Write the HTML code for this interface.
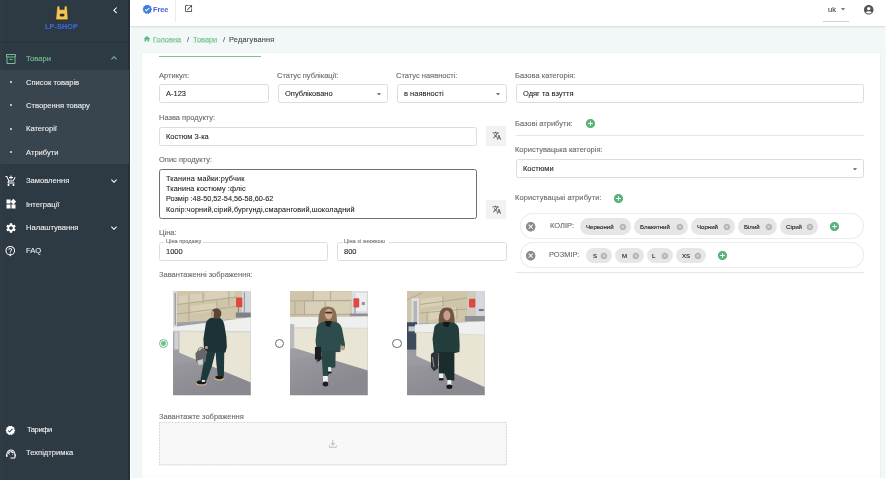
<!DOCTYPE html>
<html><head><meta charset="utf-8"><title>LP-SHOP</title>
<style>
html,body{margin:0;padding:0;width:886px;height:480px;overflow:hidden;background:#f2f7f7}
body{position:relative;font-family:"Liberation Sans", sans-serif}
.t{position:absolute;white-space:nowrap;line-height:1;font-family:"Liberation Sans", sans-serif;will-change:transform;-webkit-text-stroke-width:0.12px}
svg{display:block}
</style></head><body>
<div style="position:absolute;left:0.00px;top:0.00px;width:886.00px;height:480.00px;background:#f2f7f7"></div><div style="position:absolute;left:0.00px;top:0.00px;width:130.00px;height:480.00px;background:#2d3943"></div><div style="position:absolute;left:128.10px;top:0.00px;width:1.90px;height:480.00px;background:#25303a"></div><div style="position:absolute;left:130.00px;top:26.00px;width:1.20px;height:454.00px;background:#ffffff"></div><div style="position:absolute;left:0.00px;top:42.00px;width:128.50px;height:0.60px;background:#28333c"></div><div style="position:absolute;left:0.90px;top:0.00px;width:1.00px;height:480.00px;background:rgba(255,255,255,0.025)"></div><div style="position:absolute;left:0.00px;top:70.00px;width:128.50px;height:94.00px;background:#38444e"></div><div style="position:absolute;left:130.00px;top:0.00px;width:756.00px;height:26.00px;background:#fff;box-shadow:0 1px 2px rgba(0,0,0,0.12)"></div><div style="position:absolute;left:175.00px;top:0.00px;width:0.70px;height:21.70px;background:#ececec"></div><div style="position:absolute;left:142.40px;top:53.00px;width:737.60px;height:427.00px;background:#fff;box-shadow:0 0 1.5px rgba(0,0,0,0.10)"></div><div style="position:absolute;left:142.40px;top:475.00px;width:737.60px;height:3.00px;background:#fcfcfc"></div><div style="position:absolute;left:130.00px;top:478.00px;width:756.00px;height:2.00px;background:#fff"></div><div style="position:absolute;left:884.70px;top:26.00px;width:1.30px;height:452.00px;background:#f8fbfb"></div><div style="position:absolute;left:159.00px;top:55.80px;width:102.30px;height:1.20px;background:#7cc496"></div><svg style="position:absolute;left:55px;top:5px" width="14" height="16" viewBox="0 0 14 16"><path fill="#f5c451" stroke="#1f262c" stroke-width="0.5" d="M2.1 1.6 Q2.1 1.1 2.7 1.1 L4.2 1.1 Q4.7 1.1 4.7 1.6 L4.9 4.6 L9.2 4.6 L9.4 1.6 Q9.4 1.1 9.9 1.1 L11.4 1.1 Q12 1.1 12 1.6 L13 13.6 Q13.1 14.8 12 14.8 L1.8 14.8 Q0.8 14.8 0.9 13.6 Z"/><rect x="4.7" y="8.8" width="4.8" height="2.6" rx="1.3" fill="#2a2a2a"/></svg><div class="t" style="left:45.00px;top:22.51px;font-size:7.2px;color:#3d68da;font-weight:700;letter-spacing:0.15px">LP-SHOP</div><svg style="position:absolute;left:108.50px;top:3.50px;" width="12.5" height="12.5" viewBox="0 0 24 24"><path fill="#ffffff" d="M15.41 7.41L14 6l-6 6 6 6 1.41-1.41L10.83 12z"/></svg><svg style="position:absolute;left:4.80px;top:52.70px;" width="12" height="12" viewBox="0 0 24 24"><path fill="#74bf8f" d="M20 2H4c-1 0-2 .9-2 2v3.01c0 .72.43 1.34 1 1.69V20c0 1.1 1.1 2 2 2h14c.9 0 2-.9 2-2V8.7c.57-.35 1-.97 1-1.69V4c0-1.1-1-2-2-2zm-1 18H5V9h14v11zm1-13H4V4h16v3zM9 12h6v2H9z"/></svg><div class="t" style="left:26.20px;top:54.77px;font-size:7.6px;color:#74bf8f;font-weight:400;-webkit-text-stroke:0.15px #74bf8f">Товари</div><svg style="position:absolute;left:107.80px;top:52.30px;" width="12" height="12" viewBox="0 0 24 24"><path fill="#74bf8f" d="M12 8l-6 6 1.41 1.41L12 10.83l4.59 4.58L18 14z"/></svg><div style="position:absolute;left:9.80px;top:81.20px;width:2.00px;height:2.00px;background:#e8e8e8;border-radius:50%"></div><div class="t" style="left:26.20px;top:78.52px;font-size:7.6px;color:#f0f0f0;font-weight:400;-webkit-text-stroke:0.1px #f0f0f0">Список товарів</div><div style="position:absolute;left:9.80px;top:104.40px;width:2.00px;height:2.00px;background:#e8e8e8;border-radius:50%"></div><div class="t" style="left:26.20px;top:101.72px;font-size:7.6px;color:#f0f0f0;font-weight:400;-webkit-text-stroke:0.1px #f0f0f0">Створення товару</div><div style="position:absolute;left:9.80px;top:127.80px;width:2.00px;height:2.00px;background:#e8e8e8;border-radius:50%"></div><div class="t" style="left:26.20px;top:125.12px;font-size:7.6px;color:#f0f0f0;font-weight:400;-webkit-text-stroke:0.1px #f0f0f0">Категорії</div><div style="position:absolute;left:9.80px;top:151.40px;width:2.00px;height:2.00px;background:#e8e8e8;border-radius:50%"></div><div class="t" style="left:26.20px;top:148.72px;font-size:7.6px;color:#f0f0f0;font-weight:400;-webkit-text-stroke:0.1px #f0f0f0">Атрибути</div><svg style="position:absolute;left:4.60px;top:174.60px;" width="12" height="12" viewBox="0 0 24 24"><path fill="#ffffff" d="M11 9h2V6h3V4h-3V1h-2v3H8v2h3v3zm-4 9c-1.1 0-1.99.9-1.99 2S5.9 22 7 22s2-.9 2-2-.9-2-2-2zm10 0c-1.1 0-1.99.9-1.99 2s.89 2 1.99 2 2-.9 2-2-.9-2-2-2zm-9.83-3.25l.03-.12.9-1.63h7.45c.75 0 1.41-.41 1.75-1.03l3.86-7.01L19.42 4h-.01l-1.1 2-2.76 5H8.53l-.13-.27L6.16 6l-.95-2-.94-2H1v2h2l3.6 7.59-1.35 2.45c-.16.28-.25.61-.25.96 0 1.1.9 2 2 2h12v-2H7.42c-.13 0-.25-.11-.25-.25z"/></svg><div class="t" style="left:26.20px;top:176.92px;font-size:7.6px;color:#f0f0f0;font-weight:400;-webkit-text-stroke:0.1px #f0f0f0">Замовлення</div><svg style="position:absolute;left:107.80px;top:174.60px;" width="12" height="12" viewBox="0 0 24 24"><path fill="#ffffff" d="M16.59 8.59L12 13.17 7.41 8.59 6 10l6 6 6-6z"/></svg><svg style="position:absolute;left:4.60px;top:198.30px;" width="12" height="12" viewBox="0 0 24 24"><path fill="#ffffff" d="M13 13v8h8v-8h-8zM3 21h8v-8H3v8zM3 3v8h8V3H3zm13.66-1.31L11 7.34 16.66 13l5.66-5.66-5.66-5.65z"/></svg><div class="t" style="left:26.20px;top:200.62px;font-size:7.6px;color:#f0f0f0;font-weight:400;-webkit-text-stroke:0.1px #f0f0f0">Інтеграції</div><svg style="position:absolute;left:4.60px;top:221.70px;" width="12" height="12" viewBox="0 0 24 24"><path fill="#ffffff" d="M19.14 12.94c.04-.3.06-.61.06-.94 0-.32-.02-.64-.07-.94l2.03-1.58c.18-.14.23-.41.12-.61l-1.92-3.32c-.12-.22-.37-.29-.59-.22l-2.39.96c-.5-.38-1.03-.7-1.62-.94l-.36-2.54c-.04-.24-.24-.41-.48-.41h-3.84c-.24 0-.43.17-.47.41l-.36 2.54c-.59.24-1.13.57-1.62.94l-2.39-.96c-.22-.08-.47 0-.59.22L2.74 8.87c-.12.21-.08.47.12.61l2.03 1.58c-.05.3-.09.63-.09.94s.02.64.07.94l-2.03 1.58c-.18.14-.23.41-.12.61l1.92 3.32c.12.22.37.29.59.22l2.39-.96c.5.38 1.03.7 1.62.94l.36 2.54c.05.24.24.41.48.41h3.84c.24 0 .44-.17.47-.41l.36-2.54c.59-.24 1.13-.56 1.62-.94l2.39.96c.22.08.47 0 .59-.22l1.92-3.32c.12-.22.07-.47-.12-.61l-2.01-1.58zM12 15.6c-1.98 0-3.6-1.62-3.6-3.6s1.62-3.6 3.6-3.6 3.6 1.62 3.6 3.6-1.62 3.6-3.6 3.6z"/></svg><div class="t" style="left:26.20px;top:224.02px;font-size:7.6px;color:#f0f0f0;font-weight:400;-webkit-text-stroke:0.1px #f0f0f0">Налаштування</div><svg style="position:absolute;left:107.80px;top:221.70px;" width="12" height="12" viewBox="0 0 24 24"><path fill="#ffffff" d="M16.59 8.59L12 13.17 7.41 8.59 6 10l6 6 6-6z"/></svg><svg style="position:absolute;left:4.44px;top:245.06px" width="12.5" height="12.5" viewBox="0 0 24 24"><circle cx="12" cy="11" r="8.2" stroke="#fff" stroke-width="2" fill="none"/><path d="M9.6 18.2 L12 22 L14.4 18.2 Z" fill="#fff"/><path fill="#fff" d="M11 14.2h2v2h-2z M12 5.6c-2 0-3.5 1.5-3.5 3.3h1.8c0-.9.8-1.6 1.7-1.6s1.7.7 1.7 1.6c0 1.6-2.6 1.5-2.6 4.1h1.8c0-1.9 2.6-2.2 2.6-4.1C15.5 7.1 14 5.6 12 5.6z"/></svg><div class="t" style="left:26.20px;top:247.12px;font-size:7.6px;color:#f0f0f0;font-weight:400;-webkit-text-stroke:0.1px #f0f0f0">FAQ</div><svg style="position:absolute;left:5.25px;top:424.70px;" width="10.8" height="10.8" viewBox="0 0 24 24"><path fill="#ffffff" d="M23 12l-2.44-2.79.34-3.69-3.61-.82-1.89-3.2L12 2.96 8.6 1.5 6.71 4.69 3.1 5.5l.34 3.7L1 12l2.44 2.79-.34 3.7 3.61.82L8.6 22.5l3.4-1.47 3.4 1.46 1.89-3.19 3.61-.82-.34-3.69L23 12zm-12.91 4.72l-3.8-3.81 1.48-1.48 2.32 2.33 5.85-5.87 1.48 1.48-7.33 7.35z"/></svg><div class="t" style="left:26.60px;top:426.27px;font-size:7.6px;color:#f0f0f0;font-weight:400;-webkit-text-stroke:0.1px #f0f0f0;letter-spacing:-0.45px">Тарифи</div><svg style="position:absolute;left:4.70px;top:448.40px;" width="11.9" height="11.9" viewBox="0 0 24 24"><path fill="#ffffff" d="M21 12.22C21 6.73 16.74 3 12 3c-4.69 0-9 3.65-9 9.28-.6.34-1 .98-1 1.72v2c0 1.1.9 2 2 2h1v-6.1c0-3.87 3.13-7 7-7s7 3.13 7 7V19h-8v2h8c1.1 0 2-.9 2-2v-1.22c.59-.31 1-.92 1-1.64v-2.3c0-.7-.41-1.31-1-1.62z M9 14a1 1 0 1 0 0-2 1 1 0 0 0 0 2z M15 14a1 1 0 1 0 0-2 1 1 0 0 0 0 2z M18 11.03C17.52 8.18 15.04 6 12.05 6c-3.03 0-6.29 2.51-6.03 6.45 2.47-1.01 4.33-3.21 4.86-5.89 1.31 2.63 4 4.44 7.12 4.47z"/></svg><div class="t" style="left:26.40px;top:449.37px;font-size:7.6px;color:#f0f0f0;font-weight:400;-webkit-text-stroke:0.1px #f0f0f0">Техпідтримка</div><svg style="position:absolute;left:142.30px;top:4.20px;" width="10.6" height="10.6" viewBox="0 0 24 24"><path fill="#3b7dd8" d="M23 12l-2.44-2.79.34-3.69-3.61-.82-1.89-3.2L12 2.96 8.6 1.5 6.71 4.69 3.1 5.5l.34 3.7L1 12l2.44 2.79-.34 3.7 3.61.82L8.6 22.5l3.4-1.47 3.4 1.46 1.89-3.19 3.61-.82-.34-3.69L23 12zm-12.91 4.72l-3.8-3.81 1.48-1.48 2.32 2.33 5.85-5.87 1.48 1.48-7.33 7.35z"/></svg><div class="t" style="left:153.00px;top:6.11px;font-size:7.2px;color:#5469d4;font-weight:700;">Free</div><svg style="position:absolute;left:184.10px;top:4.40px;" width="9.2" height="9.2" viewBox="0 0 24 24"><path fill="#333333" d="M19 19H5V5h7V3H5c-1.11 0-2 .9-2 2v14c0 1.1.89 2 2 2h14c1.1 0 2-.9 2-2v-7h-2v7zM14 3v2h3.59l-9.83 9.83 1.41 1.41L19 6.41V10h2V3h-7z"/></svg><div class="t" style="left:827.80px;top:5.85px;font-size:7.5px;color:#333;font-weight:400;-webkit-text-stroke-width:0.05px">uk</div><svg style="position:absolute;left:838.40px;top:4.00px;" width="10" height="10" viewBox="0 0 24 24"><path fill="#555" d="M7 10l5 5 5-5z"/></svg><div style="position:absolute;left:822.70px;top:20.60px;width:26.20px;height:0.90px;background:#d2d2d2"></div><svg style="position:absolute;left:862.85px;top:4.05px;" width="11.5" height="11.5" viewBox="0 0 24 24"><path fill="#555" d="M12 2C6.48 2 2 6.48 2 12s4.48 10 10 10 10-4.48 10-10S17.52 2 12 2zm0 4c1.93 0 3.5 1.57 3.5 3.5S13.93 13 12 13s-3.5-1.57-3.5-3.5S10.07 6 12 6zm0 14c-2.03 0-4.43-.82-6.14-2.88C7.55 15.8 9.68 15 12 15s4.45.8 6.14 2.12C16.43 19.18 14.03 20 12 20z"/></svg><svg style="position:absolute;left:142.70px;top:35.20px;" width="7.8" height="7.8" viewBox="0 0 24 24"><path fill="#5ab47a" d="M10 20v-6h4v6h5v-8h3L12 3 2 12h3v8z"/></svg><div class="t" style="left:152.60px;top:35.94px;font-size:7.4px;color:#6dbd88;font-weight:400;text-decoration:underline;text-decoration-color:#cfe9d7;text-underline-offset:0.3px">Головна</div><div class="t" style="left:186.60px;top:35.94px;font-size:7.4px;color:#555;font-weight:400;">/</div><div class="t" style="left:193.30px;top:35.94px;font-size:7.4px;color:#6dbd88;font-weight:400;text-decoration:underline;text-decoration-color:#cfe9d7;text-underline-offset:0.3px">Товари</div><div class="t" style="left:222.70px;top:35.94px;font-size:7.4px;color:#555;font-weight:400;">/</div><div class="t" style="left:229.30px;top:35.94px;font-size:7.4px;color:#4a4a4a;font-weight:400;letter-spacing:0.18px">Редагування</div><div class="t" style="left:158.90px;top:71.55px;font-size:7.5px;color:#6b6b6b;font-weight:400;">Артикул:</div><div class="t" style="left:277.30px;top:71.55px;font-size:7.5px;color:#6b6b6b;font-weight:400;">Статус публікації:</div><div class="t" style="left:396.30px;top:71.55px;font-size:7.5px;color:#6b6b6b;font-weight:400;">Статус наявності:</div><div class="t" style="left:515.30px;top:71.55px;font-size:7.5px;color:#6b6b6b;font-weight:400;">Базова категорія:</div><div style="position:absolute;left:159.20px;top:84.20px;width:110.10px;height:19.20px;box-sizing:border-box;border:1px solid #dcdcdc;border-radius:2.5px;background:#fff"></div><div style="position:absolute;left:277.60px;top:84.20px;width:110.90px;height:19.20px;box-sizing:border-box;border:1px solid #dcdcdc;border-radius:2.5px;background:#fff"></div><div style="position:absolute;left:396.60px;top:84.20px;width:110.30px;height:19.20px;box-sizing:border-box;border:1px solid #dcdcdc;border-radius:2.5px;background:#fff"></div><div style="position:absolute;left:515.60px;top:84.20px;width:348.10px;height:19.20px;box-sizing:border-box;border:1px solid #dcdcdc;border-radius:2.5px;background:#fff"></div><div class="t" style="left:165.50px;top:90.45px;font-size:7.5px;color:#222222;font-weight:400;-webkit-text-stroke-width:0.08px;">A-123</div><div class="t" style="left:284.70px;top:90.45px;font-size:7.5px;color:#222222;font-weight:400;-webkit-text-stroke-width:0.08px;">Опубліковано</div><div class="t" style="left:403.70px;top:90.45px;font-size:7.5px;color:#222222;font-weight:400;-webkit-text-stroke-width:0.08px;">в наявності</div><div class="t" style="left:522.70px;top:90.45px;font-size:7.5px;color:#222222;font-weight:400;-webkit-text-stroke-width:0.08px;">Одяг та взуття</div><svg style="position:absolute;left:374.20px;top:88.70px;" width="10" height="10" viewBox="0 0 24 24"><path fill="#555" d="M7 10l5 5 5-5z"/></svg><svg style="position:absolute;left:493.10px;top:88.70px;" width="10" height="10" viewBox="0 0 24 24"><path fill="#555" d="M7 10l5 5 5-5z"/></svg><div class="t" style="left:158.90px;top:113.65px;font-size:7.5px;color:#6b6b6b;font-weight:400;">Назва продукту:</div><div style="position:absolute;left:159.20px;top:126.80px;width:318.20px;height:18.80px;box-sizing:border-box;border:1px solid #dcdcdc;border-radius:2.5px;background:#fff"></div><div class="t" style="left:165.70px;top:132.65px;font-size:7.5px;color:#222222;font-weight:400;-webkit-text-stroke-width:0.08px;">Костюм 3-ка</div><div style="position:absolute;left:486.25px;top:126.25px;width:19.65px;height:19.65px;background:#f2f2f2"></div><svg style="position:absolute;left:491.80px;top:131.40px;" width="9.5" height="9.5" viewBox="0 0 24 24"><path fill="#444" d="M12.87 15.07l-2.54-2.51.03-.03c1.74-1.94 2.98-4.17 3.71-6.53H17V4h-7V2H8v2H1v1.99h11.17C11.5 7.92 10.44 9.75 9 11.35 8.07 10.32 7.3 9.19 6.69 8h-2c.73 1.63 1.73 3.17 2.98 4.56l-5.09 5.02L4 19l5-5 3.11 3.11.76-2.04zM18.5 10h-2L12 22h2l1.12-3h4.75L21 22h2l-4.5-12zm-2.62 7l1.62-4.33L19.12 17h-3.24z"/></svg><div class="t" style="left:158.90px;top:155.95px;font-size:7.5px;color:#6b6b6b;font-weight:400;">Опис продукту:</div><div style="position:absolute;left:159.20px;top:168.60px;width:318.20px;height:50.60px;box-sizing:border-box;border:1px solid #6f6f6f;border-radius:2.5px;background:#fff"></div><div class="t" style="left:166.00px;top:174.62px;font-size:7.3px;color:#222222;font-weight:400;-webkit-text-stroke-width:0.08px;letter-spacing:0.18px">Тканина майки:рубчик</div><div class="t" style="left:166.00px;top:184.99px;font-size:7.3px;color:#222222;font-weight:400;-webkit-text-stroke-width:0.08px;letter-spacing:0.1px">Тканина костюму :фліс</div><div class="t" style="left:166.00px;top:195.36px;font-size:7.3px;color:#222222;font-weight:400;-webkit-text-stroke-width:0.08px;letter-spacing:0px">Розмір :48-50,52-54,56-58,60-62</div><div class="t" style="left:166.00px;top:205.73px;font-size:7.3px;color:#222222;font-weight:400;-webkit-text-stroke-width:0.08px;letter-spacing:0.115px">Колір:чорний,сірий,бургунді,смаранговий,шоколадний</div><div style="position:absolute;left:486.25px;top:199.80px;width:19.65px;height:19.60px;background:#f2f2f2"></div><svg style="position:absolute;left:491.80px;top:204.90px;" width="9.5" height="9.5" viewBox="0 0 24 24"><path fill="#444" d="M12.87 15.07l-2.54-2.51.03-.03c1.74-1.94 2.98-4.17 3.71-6.53H17V4h-7V2H8v2H1v1.99h11.17C11.5 7.92 10.44 9.75 9 11.35 8.07 10.32 7.3 9.19 6.69 8h-2c.73 1.63 1.73 3.17 2.98 4.56l-5.09 5.02L4 19l5-5 3.11 3.11.76-2.04zM18.5 10h-2L12 22h2l1.12-3h4.75L21 22h2l-4.5-12zm-2.62 7l1.62-4.33L19.12 17h-3.24z"/></svg><div class="t" style="left:158.90px;top:228.75px;font-size:7.5px;color:#6b6b6b;font-weight:400;">Ціна:</div><div style="position:absolute;left:159.20px;top:242.20px;width:169.20px;height:18.50px;box-sizing:border-box;border:1px solid #dcdcdc;border-radius:2.5px;background:#fff"></div><div style="position:absolute;left:164.10px;top:241.20px;width:39.30px;height:2.50px;background:#fff"></div><div class="t" style="left:165.60px;top:239.46px;font-size:5.6px;color:#777;font-weight:400;">Ціна продажу</div><div style="position:absolute;left:337.40px;top:242.20px;width:169.60px;height:18.50px;box-sizing:border-box;border:1px solid #dcdcdc;border-radius:2.5px;background:#fff"></div><div style="position:absolute;left:342.50px;top:241.20px;width:46.20px;height:2.50px;background:#fff"></div><div class="t" style="left:344.00px;top:239.46px;font-size:5.6px;color:#777;font-weight:400;">Ціна зі знижкою</div><div class="t" style="left:166.30px;top:248.05px;font-size:7.5px;color:#222222;font-weight:400;-webkit-text-stroke-width:0.08px;">1000</div><div class="t" style="left:343.90px;top:248.05px;font-size:7.5px;color:#222222;font-weight:400;-webkit-text-stroke-width:0.08px;">800</div><div class="t" style="left:158.90px;top:271.15px;font-size:7.5px;color:#6b6b6b;font-weight:400;">Завантаженні зображення:</div><svg style="position:absolute;left:173.4px;top:291.4px" width="77.8" height="104.2" viewBox="0 0 78 104" preserveAspectRatio="none"><defs><linearGradient id="gf1" x1="0" y1="0" x2="0.3" y2="1"><stop offset="0.45" stop-color="#a09fa6"/><stop offset="1" stop-color="#8a8990"/></linearGradient><clipPath id="cf1"><rect x="0" y="0" width="78" height="104"/></clipPath></defs><g clip-path="url(#cf1)"><g><rect x="-2" y="-2" width="82" height="108" fill="url(#gf1)"/><polygon points="-2,-2 80,-2 80,27 4,31.5 -2,36.5" fill="#cec5ab"/><polygon points="6,5 30,2 30,10 6,13" fill="#d9d0b8"/><polygon points="18,15 44,12 44,20 18,23" fill="#d9d0b8"/><polygon points="32,1 62,-2 62,6 32,9" fill="#d9d0b8"/><path d="M4 13.5 L64 6 M4 23 L64 15.5 M16 4 L16 30 M30 2 L30 12 M44 10 L44 26 M56 0 L56 15" stroke="#b3aa91" stroke-width="1" fill="none"/><rect x="-2" y="-2" width="6" height="39" fill="#d6d8da"/><rect x="1.5" y="2" width="1.5" height="32" fill="#9da1a6"/><rect x="69" y="-2" width="11" height="27" fill="#d4d7db"/><rect x="71" y="1" width="1.2" height="22" fill="#a0a4a8"/><rect x="63" y="21.5" width="17" height="5" fill="#7f8186"/><rect x="65" y="15" width="1.2" height="8" fill="#8a8a8a"/><rect x="63.2" y="6.5" width="6.3" height="9.8" rx="1" fill="#e0473f"/><polygon points="-2,37 4,35.5 80,26 80,41 -2,40.5" fill="#efefed"/><polygon points="-2,39.5 80,40 80,42 -2,41.5" fill="#d9d8d2"/><polygon points="6.2,41 80,41.5 80,92 6.2,61.6" fill="#e9e5d4"/><rect x="-2" y="40.5" width="8.2" height="19" fill="#a9abb0"/><rect x="1.5" y="41" width="4" height="17" fill="#cfd1d3"/><polygon points="-2,59 6.2,61.6 30,72 -2,72" fill="#a09ea5" opacity="0.6"/><path d="M33,32 Q35,27 40,26.5 L46,26.5 Q50.5,28 51.5,34 L53.5,46 L54,56 L52.6,61.3 L45,62 L34,61 L31,58 L30.5,48 Z" fill="#1d3234"/><ellipse cx="43.5" cy="22.5" rx="5" ry="5.3" fill="#5b4538"/><rect x="38.4" y="20" width="2.6" height="7" rx="1.2" fill="#c9a78f"/><polygon points="34,60 42.5,61 39,75 33.6,89.5 27.5,89.5 30,75" fill="#1e393c"/><polygon points="42.7,61 51.4,61 51,85.8 45,85.8 43.5,72" fill="#1e393c"/><ellipse cx="28.5" cy="92" rx="5.5" ry="2.6" fill="#c9ad8e"/><ellipse cx="28.5" cy="91" rx="4.8" ry="2" fill="#1a1a1a"/><rect x="29" y="88.8" width="3" height="2" fill="#e6e6e6"/><ellipse cx="46.5" cy="87" rx="5" ry="2.3" fill="#c9ad8e"/><ellipse cx="46.5" cy="86.2" rx="4.3" ry="1.8" fill="#1c1c1c"/><path d="M22.5,62 L30,57 L33.6,60 L33,70 L27,74.2 L23,70 Z" fill="#66666a"/><path d="M24,69.5 L30,68 L30,73 L26,74 Z" fill="#cfcfcf"/><path d="M24.5,61 Q26,55 30,57" stroke="#444" stroke-width="0.8" fill="none"/><rect x="32" y="55" width="3" height="3" rx="1" fill="#b89882"/></g></g></svg><svg style="position:absolute;left:289.8px;top:291.4px" width="77.8" height="104.2" viewBox="0 0 78 104" preserveAspectRatio="none"><defs><linearGradient id="gf2" x1="0" y1="0" x2="0.3" y2="1"><stop offset="0.45" stop-color="#a09fa6"/><stop offset="1" stop-color="#8a8990"/></linearGradient><clipPath id="cf2"><rect x="0" y="0" width="78" height="104"/></clipPath></defs><g clip-path="url(#cf2)"><g><rect x="-2" y="-2" width="82" height="108" fill="url(#gf2)"/><polygon points="-2,-2 80,-2 80,25 -2,26" fill="#cec5ab"/><rect x="24" y="0" width="16" height="9" fill="#d9d0b8"/><rect x="15" y="11" width="20" height="12" fill="#d9d0b8"/><rect x="41" y="1" width="22" height="8" fill="#d9d0b8"/><rect x="36" y="11" width="24" height="12" fill="#d9d0b8"/><path d="M-2 9.9 L62 9.3 M-2 23.6 L62 23.3 M23.3 0 L23.3 9.6 M40.8 0 L40.8 9.5 M14.6 10 L14.6 23.5 M35.2 10 L35.2 23.4 M5 10 L5 23.5" stroke="#b3aa91" stroke-width="1" fill="none"/><rect x="62" y="-2" width="18" height="26" fill="#d9dce0"/><rect x="66" y="2" width="11" height="18" fill="#eceef0"/><rect x="72" y="11" width="3" height="3" fill="#8f9397"/><rect x="60" y="22.5" width="20" height="3.2" fill="#8d8f92"/><rect x="64.6" y="15" width="1.2" height="8" fill="#9a9a9a"/><rect x="63.6" y="7.2" width="5.8" height="9.2" rx="1" fill="#e0473f"/><polygon points="-2,26 80,25.2 80,37.4 -2,36.5" fill="#efefed"/><polygon points="-2,35.8 80,36.6 80,38.4 -2,37.6" fill="#dcdbd5"/><polygon points="4,37.5 80,38 80,80 4,56.8" fill="#e9e5d4"/><rect x="-2" y="33" width="6.2" height="25" fill="#b8babd"/><polygon points="-2,57 4,57 30,65 -2,68" fill="#a09ea5" opacity="0.5"/><path d="M28.5,37 Q27.5,21 32.5,17 Q38,14 43.5,17 Q48,21 47,37 Z" fill="#8a6d55"/><path d="M27,36 Q29,31 35,30.5 L43,30.5 Q50,30.5 52,37 L55.1,53 Q55.5,58.5 52.5,58.5 L51,53 L50.5,61 L27,61.5 L25.6,50 Z" fill="#2d4d4d"/><ellipse cx="38.8" cy="23" rx="3.8" ry="5.4" fill="#d0a890"/><rect x="35.3" y="20.6" width="7" height="1.8" rx="0.8" fill="#3a3030"/><polygon points="35,30 42,30 40,36 36,35" fill="#1a1a1a"/><polygon points="31.5,60 45.8,60 45.5,76 41,77 38.2,84.8 33,84.8" fill="#2a4847"/><rect x="38.2" y="76" width="3" height="4.5" fill="#f0f0f0"/><rect x="38" y="80.5" width="3.6" height="1.8" fill="#1a1a1a"/><rect x="33.2" y="84.8" width="4.7" height="5.8" fill="#f2f2f2"/><ellipse cx="35.6" cy="92.8" rx="2.8" ry="2.5" fill="#1c1c24"/><polygon points="25,56 31,55.6 32,68 28,70.8 25,68" fill="#1d1d1f"/><rect x="26.5" y="68" width="1.2" height="4" fill="#6d7080"/><ellipse cx="53" cy="57" rx="2" ry="2.5" fill="#c49a82"/></g></g></svg><svg style="position:absolute;left:407.4px;top:291.4px" width="77.8" height="104.2" viewBox="0 0 78 104" preserveAspectRatio="none"><defs><linearGradient id="gf3" x1="0" y1="0" x2="0.3" y2="1"><stop offset="0.45" stop-color="#a09fa6"/><stop offset="1" stop-color="#8a8990"/></linearGradient><clipPath id="cf3"><rect x="0" y="0" width="78" height="104"/></clipPath></defs><g clip-path="url(#cf3)"><g><rect x="-2" y="-2" width="82" height="108" fill="url(#gf3)"/><polygon points="-2,-2 80,-2 80,30 -2,33" fill="#cec5ab"/><polygon points="14,8 36,5 36,14 14,17" fill="#d9d0b8"/><polygon points="22,20 50,16 50,26 22,29" fill="#d9d0b8"/><path d="M-1 9.5 L15 2 M13 13.5 L60 7 M13 22 L60 18 M20 22 L20 32 M36 5 L36 15 M50 16 L50 28" stroke="#b3aa91" stroke-width="1" fill="none"/><rect x="4.5" y="7.2" width="7.4" height="28" fill="#dfe0e0"/><rect x="6.5" y="10" width="3.5" height="23" fill="#b0b5b8"/><rect x="60.5" y="-2" width="9" height="31" fill="#cfcac0"/><rect x="69.1" y="-2" width="10" height="27" fill="#d5d8dc"/><rect x="72" y="18" width="5" height="2" fill="#70757a"/><rect x="58" y="25" width="22" height="5" fill="#8e9093"/><rect x="62.2" y="7.8" width="6.3" height="8.6" rx="1" fill="#e0473f"/><rect x="-2" y="31.2" width="12.2" height="27.3" fill="#3b4a5c"/><rect x="1.5" y="35.3" width="8.5" height="5" fill="#c5c8cc"/><polygon points="7.9,33.5 80,30 80,44.4 7.9,41" fill="#efefed"/><polygon points="7.9,40.5 80,43.8 80,45.5 7.9,42.2" fill="#d9d8d2"/><polygon points="9.3,41.5 80,44.5 80,97 9.3,64.9" fill="#e9e5d4"/><polygon points="-2,58.5 9.3,64.9 30,74 -2,74" fill="#a09ea5" opacity="0.5"/><path d="M32,35 Q31,21 35.5,17.5 Q40,15.5 44.5,17.5 Q48.5,22 47.5,35 Z" fill="#6e5444"/><path d="M27.5,36 Q29,32 35,31.5 L45,31.5 Q51,32 52,38 L52.8,55 L52.5,61 L48,62 L27,62 L25.6,48 Z" fill="#223d3c"/><ellipse cx="40" cy="24.5" rx="3.5" ry="5" fill="#c8a08a"/><polygon points="36,31 43,31 41.5,36 37,35.5" fill="#141818"/><polygon points="31.4,61 47.5,61 47.5,89.4 40.5,89 37.6,82.4 32,82.4" fill="#1b2c2d"/><rect x="32.2" y="82.4" width="4" height="4.6" fill="#f0f0f0"/><rect x="32" y="87" width="4.6" height="2.2" fill="#1a1a1a"/><rect x="40.5" y="88.9" width="4" height="5.2" fill="#f0f0f0"/><ellipse cx="42.5" cy="95.5" rx="3" ry="2.2" fill="#161616"/><polygon points="24,63 30,59 31.4,62 31,77 27,80.1 24,76" fill="#2f3338"/><path d="M25.5,66 L27,76" stroke="#8f97a3" stroke-width="1" fill="none"/></g></g></svg><div style="position:absolute;left:158.80px;top:338.80px;width:9.2px;height:9.2px;box-sizing:border-box;border:1px solid #6cc08a;border-radius:50%"></div><div style="position:absolute;left:161.00px;top:341.00px;width:4.8px;height:4.8px;background:#6cc08a;border-radius:50%"></div><div style="position:absolute;left:275.30px;top:338.90px;width:9.2px;height:9.2px;box-sizing:border-box;border:1px solid #6a6a6a;border-radius:50%"></div><div style="position:absolute;left:392.40px;top:338.90px;width:9.2px;height:9.2px;box-sizing:border-box;border:1px solid #6a6a6a;border-radius:50%"></div><div class="t" style="left:158.60px;top:413.15px;font-size:7.5px;color:#6b6b6b;font-weight:400;">Завантажте зображення</div><div style="position:absolute;left:158.80px;top:422.40px;width:347.90px;height:43.20px;background:#f8f8f8"></div><svg style="position:absolute;left:158.8px;top:422.4px" width="347.9" height="43.2"><rect x="0.5" y="0.5" width="346.9" height="42.2" fill="none" stroke="#d2d2d2" stroke-width="0.9" stroke-dasharray="1.8 1.2"/></svg><svg style="position:absolute;left:327.25px;top:438.35px;" width="11.7" height="11.7" viewBox="0 0 24 24"><path fill="#bdbdbd" d="M18 15v3H6v-3H4v3c0 1.1.9 2 2 2h12c1.1 0 2-.9 2-2v-3h-2zm-1-4l-1.41-1.41L13 12.17V4h-2v8.17L8.41 9.59 7 11l5 5 5-5z"/></svg><div class="t" style="left:515.30px;top:120.25px;font-size:7.5px;color:#6b6b6b;font-weight:400;">Базові атрибути:</div><svg style="position:absolute;left:584.60px;top:118.20px;" width="11" height="11" viewBox="0 0 24 24"><path fill="#5ab47a" d="M12 2C6.48 2 2 6.48 2 12s4.48 10 10 10 10-4.48 10-10S17.52 2 12 2zm5 11h-4v4h-2v-4H7v-2h4V7h2v4h4v2z"/></svg><div style="position:absolute;left:515.60px;top:135.00px;width:348.10px;height:0.80px;background:#e6e6e6"></div><div class="t" style="left:515.30px;top:145.95px;font-size:7.5px;color:#6b6b6b;font-weight:400;">Користувацька категорія:</div><div style="position:absolute;left:515.60px;top:159.30px;width:348.10px;height:18.50px;box-sizing:border-box;border:1px solid #dcdcdc;border-radius:2.5px;background:#fff"></div><div class="t" style="left:522.70px;top:165.25px;font-size:7.5px;color:#222222;font-weight:400;-webkit-text-stroke-width:0.08px;">Костюми</div><svg style="position:absolute;left:850.00px;top:163.90px;" width="10" height="10" viewBox="0 0 24 24"><path fill="#555" d="M7 10l5 5 5-5z"/></svg><div class="t" style="left:515.30px;top:194.45px;font-size:7.5px;color:#6b6b6b;font-weight:400;letter-spacing:0.09px">Користувацькі атрибути:</div><svg style="position:absolute;left:612.60px;top:192.90px;" width="11" height="11" viewBox="0 0 24 24"><path fill="#5ab47a" d="M12 2C6.48 2 2 6.48 2 12s4.48 10 10 10 10-4.48 10-10S17.52 2 12 2zm5 11h-4v4h-2v-4H7v-2h4V7h2v4h4v2z"/></svg><div style="position:absolute;left:520.30px;top:213.00px;width:344.00px;height:26.40px;box-sizing:border-box;border:1px solid #ececec;border-radius:14px;background:#fff;box-shadow:0 0 1px rgba(0,0,0,0.06)"></div><svg style="position:absolute;left:525.30px;top:221.00px;" width="11.4" height="11.4" viewBox="0 0 24 24"><path fill="#8a8a8a" d="M12 2C6.47 2 2 6.47 2 12s4.47 10 10 10 10-4.47 10-10S17.53 2 12 2zm5 13.59L15.59 17 12 13.41 8.41 17 7 15.59 10.59 12 7 8.41 8.41 7 12 10.59 15.59 7 17 8.41 13.41 12 17 15.59z"/></svg><div class="t" style="left:549.60px;top:222.45px;font-size:7.5px;color:#6b6b6b;font-weight:400;">КОЛІР:</div><div style="position:absolute;left:580.20px;top:218.20px;width:50.80px;height:16.60px;background:#e6e6e6;border-radius:9px"></div><div class="t" style="left:585.50px;top:223.54px;font-size:6.1px;color:#222;font-weight:400;">Червоний</div><svg style="position:absolute;left:619.10px;top:222.60px;" width="7.8" height="7.8" viewBox="0 0 24 24"><path fill="#b2b2b2" d="M12 2C6.47 2 2 6.47 2 12s4.47 10 10 10 10-4.47 10-10S17.53 2 12 2zm5 13.59L15.59 17 12 13.41 8.41 17 7 15.59 10.59 12 7 8.41 8.41 7 12 10.59 15.59 7 17 8.41 13.41 12 17 15.59z"/></svg><div style="position:absolute;left:634.20px;top:218.20px;width:53.40px;height:16.60px;background:#e6e6e6;border-radius:9px"></div><div class="t" style="left:639.50px;top:223.54px;font-size:6.1px;color:#222;font-weight:400;">Блакитний</div><svg style="position:absolute;left:675.80px;top:222.60px;" width="7.8" height="7.8" viewBox="0 0 24 24"><path fill="#b2b2b2" d="M12 2C6.47 2 2 6.47 2 12s4.47 10 10 10 10-4.47 10-10S17.53 2 12 2zm5 13.59L15.59 17 12 13.41 8.41 17 7 15.59 10.59 12 7 8.41 8.41 7 12 10.59 15.59 7 17 8.41 13.41 12 17 15.59z"/></svg><div style="position:absolute;left:690.80px;top:218.20px;width:44.20px;height:16.60px;background:#e6e6e6;border-radius:9px"></div><div class="t" style="left:696.80px;top:223.54px;font-size:6.1px;color:#222;font-weight:400;">Чорний</div><svg style="position:absolute;left:723.10px;top:222.60px;" width="7.8" height="7.8" viewBox="0 0 24 24"><path fill="#b2b2b2" d="M12 2C6.47 2 2 6.47 2 12s4.47 10 10 10 10-4.47 10-10S17.53 2 12 2zm5 13.59L15.59 17 12 13.41 8.41 17 7 15.59 10.59 12 7 8.41 8.41 7 12 10.59 15.59 7 17 8.41 13.41 12 17 15.59z"/></svg><div style="position:absolute;left:738.20px;top:218.20px;width:38.60px;height:16.60px;background:#e6e6e6;border-radius:9px"></div><div class="t" style="left:743.70px;top:223.54px;font-size:6.1px;color:#222;font-weight:400;">Білий</div><svg style="position:absolute;left:765.00px;top:222.60px;" width="7.8" height="7.8" viewBox="0 0 24 24"><path fill="#b2b2b2" d="M12 2C6.47 2 2 6.47 2 12s4.47 10 10 10 10-4.47 10-10S17.53 2 12 2zm5 13.59L15.59 17 12 13.41 8.41 17 7 15.59 10.59 12 7 8.41 8.41 7 12 10.59 15.59 7 17 8.41 13.41 12 17 15.59z"/></svg><div style="position:absolute;left:779.90px;top:218.20px;width:38.60px;height:16.60px;background:#e6e6e6;border-radius:9px"></div><div class="t" style="left:785.60px;top:223.54px;font-size:6.1px;color:#222;font-weight:400;">Сірий</div><svg style="position:absolute;left:806.30px;top:222.60px;" width="7.8" height="7.8" viewBox="0 0 24 24"><path fill="#b2b2b2" d="M12 2C6.47 2 2 6.47 2 12s4.47 10 10 10 10-4.47 10-10S17.53 2 12 2zm5 13.59L15.59 17 12 13.41 8.41 17 7 15.59 10.59 12 7 8.41 8.41 7 12 10.59 15.59 7 17 8.41 13.41 12 17 15.59z"/></svg><svg style="position:absolute;left:829.20px;top:220.80px;" width="11" height="11" viewBox="0 0 24 24"><path fill="#5ab47a" d="M12 2C6.48 2 2 6.48 2 12s4.48 10 10 10 10-4.48 10-10S17.52 2 12 2zm5 11h-4v4h-2v-4H7v-2h4V7h2v4h4v2z"/></svg><div style="position:absolute;left:520.30px;top:242.30px;width:344.00px;height:26.10px;box-sizing:border-box;border:1px solid #ececec;border-radius:14px;background:#fff;box-shadow:0 0 1px rgba(0,0,0,0.06)"></div><svg style="position:absolute;left:525.20px;top:249.90px;" width="11.4" height="11.4" viewBox="0 0 24 24"><path fill="#8a8a8a" d="M12 2C6.47 2 2 6.47 2 12s4.47 10 10 10 10-4.47 10-10S17.53 2 12 2zm5 13.59L15.59 17 12 13.41 8.41 17 7 15.59 10.59 12 7 8.41 8.41 7 12 10.59 15.59 7 17 8.41 13.41 12 17 15.59z"/></svg><div class="t" style="left:549.20px;top:251.45px;font-size:7.5px;color:#6b6b6b;font-weight:400;">РОЗМІР:</div><div style="position:absolute;left:586.10px;top:247.50px;width:26.30px;height:15.90px;background:#e6e6e6;border-radius:9px"></div><div class="t" style="left:593.10px;top:252.99px;font-size:6.1px;color:#222;font-weight:400;">S</div><svg style="position:absolute;left:600.40px;top:251.55px;" width="7.8" height="7.8" viewBox="0 0 24 24"><path fill="#b2b2b2" d="M12 2C6.47 2 2 6.47 2 12s4.47 10 10 10 10-4.47 10-10S17.53 2 12 2zm5 13.59L15.59 17 12 13.41 8.41 17 7 15.59 10.59 12 7 8.41 8.41 7 12 10.59 15.59 7 17 8.41 13.41 12 17 15.59z"/></svg><div style="position:absolute;left:615.00px;top:247.50px;width:28.50px;height:15.90px;background:#e6e6e6;border-radius:9px"></div><div class="t" style="left:622.20px;top:252.99px;font-size:6.1px;color:#222;font-weight:400;">M</div><svg style="position:absolute;left:631.70px;top:251.55px;" width="7.8" height="7.8" viewBox="0 0 24 24"><path fill="#b2b2b2" d="M12 2C6.47 2 2 6.47 2 12s4.47 10 10 10 10-4.47 10-10S17.53 2 12 2zm5 13.59L15.59 17 12 13.41 8.41 17 7 15.59 10.59 12 7 8.41 8.41 7 12 10.59 15.59 7 17 8.41 13.41 12 17 15.59z"/></svg><div style="position:absolute;left:647.00px;top:247.50px;width:25.70px;height:15.90px;background:#e6e6e6;border-radius:9px"></div><div class="t" style="left:652.30px;top:252.99px;font-size:6.1px;color:#222;font-weight:400;">L</div><svg style="position:absolute;left:660.70px;top:251.55px;" width="7.8" height="7.8" viewBox="0 0 24 24"><path fill="#b2b2b2" d="M12 2C6.47 2 2 6.47 2 12s4.47 10 10 10 10-4.47 10-10S17.53 2 12 2zm5 13.59L15.59 17 12 13.41 8.41 17 7 15.59 10.59 12 7 8.41 8.41 7 12 10.59 15.59 7 17 8.41 13.41 12 17 15.59z"/></svg><div style="position:absolute;left:675.90px;top:247.50px;width:30.50px;height:15.90px;background:#e6e6e6;border-radius:9px"></div><div class="t" style="left:681.50px;top:252.99px;font-size:6.1px;color:#222;font-weight:400;">XS</div><svg style="position:absolute;left:694.20px;top:251.55px;" width="7.8" height="7.8" viewBox="0 0 24 24"><path fill="#b2b2b2" d="M12 2C6.47 2 2 6.47 2 12s4.47 10 10 10 10-4.47 10-10S17.53 2 12 2zm5 13.59L15.59 17 12 13.41 8.41 17 7 15.59 10.59 12 7 8.41 8.41 7 12 10.59 15.59 7 17 8.41 13.41 12 17 15.59z"/></svg><svg style="position:absolute;left:716.90px;top:250.00px;" width="11" height="11" viewBox="0 0 24 24"><path fill="#5ab47a" d="M12 2C6.48 2 2 6.48 2 12s4.48 10 10 10 10-4.48 10-10S17.52 2 12 2zm5 11h-4v4h-2v-4H7v-2h4V7h2v4h4v2z"/></svg><div style="position:absolute;left:516.00px;top:272.00px;width:347.50px;height:0.80px;background:#e6e6e6"></div>
</body></html>
